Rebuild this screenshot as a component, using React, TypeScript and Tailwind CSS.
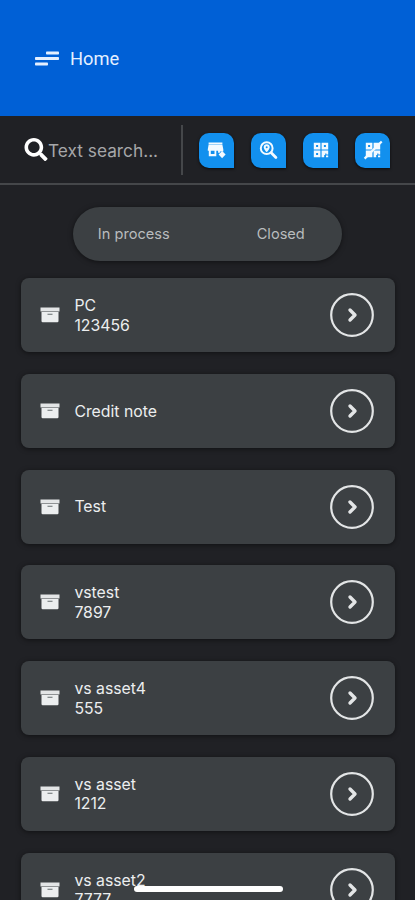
import type { ReactNode } from "react";
import { FaSearch } from "react-icons/fa";

type Item = {
  name: string;
  code?: string;
};

const items: Item[] = [
  { name: "PC", code: "123456" },
  { name: "Credit note" },
  { name: "Test" },
  { name: "vstest", code: "7897" },
  { name: "vs asset4", code: "555" },
  { name: "vs asset", code: "1212" },
  { name: "vs asset2", code: "7777" },
];

const MenuIcon = () => (
  <svg width="24" height="16" viewBox="0 0 24 16" fill="#e4efff">
    <rect x="11" y="0.5" width="13" height="3" rx="0.8" />
    <rect x="0" y="6" width="24" height="3" rx="0.8" />
    <rect x="0" y="11.5" width="13" height="3" rx="0.8" />
  </svg>
);

const StoreIcon = () => (
  <svg width="19" height="19" viewBox="0 0 19 19" fill="#f3faff">
    <path d="M1.600 1.500h13.800v2H1.600z" />
    <path
      fillRule="evenodd"
      d="M1.600 3.700h13.800l.9 4.500v2.200h-3.400v1.400h-1.800V9.800H9.300V15.300H1.800V9.800H.8V8.200zM3.800 9.800v3.200h3.700V9.800z"
    />
    <path d="M15.100 10l3.500 3.600-3.500 3.600-3.500-3.600z" />
  </svg>
);

const LocationSearchIcon = () => (
  <svg width="19" height="19" viewBox="0 0 19 19" fill="none">
    <circle cx="7.700" cy="7.200" r="5.900" stroke="#f3faff" strokeWidth="2" />
    <path d="M12.200 11.700l4.700 4.700" stroke="#f3faff" strokeWidth="2.800" strokeLinecap="round" />
    <path
      fill="#f3faff"
      fillRule="evenodd"
      d="M7.700 3.300a3 3 0 0 1 3 3c0 2-3 4.900-3 4.900s-3-2.900-3-4.900a3 3 0 0 1 3-3zm0 2a1 1 0 1 0 0 2 1 1 0 0 0 0-2z"
    />
  </svg>
);

const QrIcon = () => (
  <svg width="16" height="16" viewBox="0 0 16 16" fill="#f3faff">
    <path
      fillRule="evenodd"
      d="M.8.8h6.600v6.600H.8zM3.100 3.100v2h2v-2zM8.600.8h6.600v6.600H8.600zM10.900 3.100v2h2v-2zM.8 8.600h6.600v6.600H.8zM3.100 10.900v2h2v-2z"
    />
    <path d="M8.600 8.600h6.600v4h-1.800v-1h-1.200v1.400h-1v2.200H8.600zM13 13.400h2.200v1.800H13z" />
  </svg>
);

const QrOffIcon = () => (
  <svg width="20" height="20" viewBox="0 0 20 20" fill="#f3faff">
    <path
      fillRule="evenodd"
      d="M2.800 2.800h6.600v6.600H2.800zM5.100 5.100v2h2v-2z"
    />
    <path d="M10.600 2.800h6.600v6.600h-6.600zM2.800 10.600h6.600v6.600H2.800z" />
    <path d="M10.600 10.600h6.600v4h-1.800v-1h-1.200v1.400h-1v2.200h-2.600zM15 15.400h2.200v1.800H15z" />
    <path d="M1.600 18.600L18.700 1.500" stroke="#f3faff" strokeWidth="2.200" />
  </svg>
);

const BoxIcon = () => (
  <svg width="20" height="16" viewBox="0 0 20 16">
    <path fill="#e3e5e6" d="M.5.500h19v4H.5z" />
    <path fill="#eceeef" d="M1.500 4.900h17v9.100q0 1.200-1.200 1.200H2.700q-1.200 0-1.200-1.200z" />
    <path stroke="#7b8082" strokeWidth="1.200" d="M7.500 7.300h5" />
  </svg>
);

const ArrowIcon = () => (
  <svg width="44" height="44" viewBox="0 0 44 44" fill="none" stroke="#e3e5e6">
    <circle cx="22" cy="22" r="20.800" strokeWidth="2.200" />
    <path
      d="M20 17l5 5-5 5"
      strokeWidth="3.400"
      strokeLinecap="round"
      strokeLinejoin="round"
    />
  </svg>
);

const ToolButton = ({ label, children }: { label: string; children: ReactNode }) => (
  <button
    type="button"
    aria-label={label}
    className="flex h-[35px] w-[35px] items-center justify-center rounded-[10px] rounded-br-none bg-[#1290ee] shadow-[0_1px_3px_rgba(0,0,0,0.7)]"
  >
    {children}
  </button>
);

const Card = ({ item }: { item: Item }) => (
  <li className="flex h-[74px] shrink-0 items-center rounded-lg bg-[#3c4043] pr-[21px] pl-[19px] shadow-[0_1px_5px_rgba(0,0,0,0.5)]">
    <BoxIcon />
    <div className="ml-[14px] flex-1 pt-px text-[15.800px] leading-[19.500px] text-[#eceeef]">
      <p>{item.name}</p>
      {item.code && <p>{item.code}</p>}
    </div>
    <button type="button" aria-label={`Open ${item.name}`}>
      <ArrowIcon />
    </button>
  </li>
);

const App = () => {
  return (
    <div className="relative flex h-[900px] w-[415px] flex-col overflow-hidden bg-[#202125] font-['Inter',sans-serif]">
      <header className="flex h-[116px] shrink-0 items-center gap-[11px] bg-[#0060d6] pt-px pl-[35px] text-[#e4efff]">
        <MenuIcon />
        <h1 className="pt-px font-[Roboto,sans-serif] text-[18.300px]">Home</h1>
      </header>

      <div className="flex h-[69px] shrink-0 items-center border-b-2 border-[#45474a] bg-[#202125]">
        <div className="flex w-[181px] items-center pl-[24px]">
          <FaSearch className="h-[23px] w-6 shrink-0 text-white" />
          <span className="pt-[3px] text-[17.300px] whitespace-nowrap text-[#a6a7a9]">Text search...</span>
        </div>
        <div className="h-[50px] w-[2px] bg-[#45474a]" />
        <div className="flex gap-[17px] pt-px pl-[16px]">
          <ToolButton label="Add store">
            <StoreIcon />
          </ToolButton>
          <ToolButton label="Search location">
            <LocationSearchIcon />
          </ToolButton>
          <ToolButton label="Scan code">
            <QrIcon />
          </ToolButton>
          <ToolButton label="Without code">
            <QrOffIcon />
          </ToolButton>
        </div>
      </div>

      <div className="mt-[22px] ml-[73px] grid h-[54px] w-[269px] shrink-0 grid-cols-2 items-center rounded-full bg-[#3c4043] text-[14.600px] text-[#b9bcbe] shadow-[0_1px_5px_rgba(0,0,0,0.5)]">
        <button type="button" className="pt-px pr-[13px]">In process</button>
        <button type="button" className="pt-px pl-[12px]">Closed</button>
      </div>

      <ul className="mt-[17px] flex flex-col gap-[21.800px] pr-[20.500px] pl-[21.400px]">
        {items.map((item) => (
          <Card key={item.name} item={item} />
        ))}
      </ul>

      {/* home indicator */}
      <div className="absolute top-[886px] left-[134px] h-[6px] w-[149px] rounded-full bg-white" />
    </div>
  );
};

export default App;
